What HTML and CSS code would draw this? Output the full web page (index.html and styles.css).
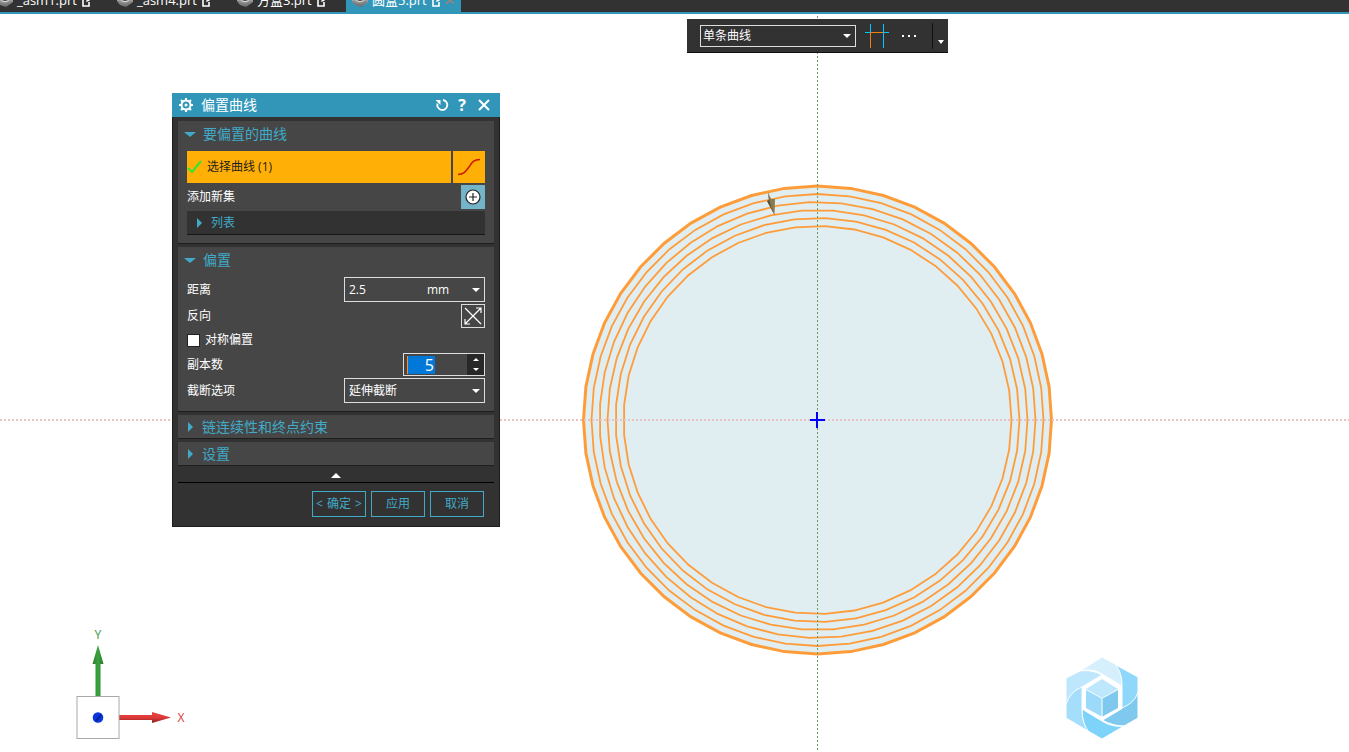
FILE: index.html
```html
<!DOCTYPE html>
<html lang="zh-CN">
<head>
<meta charset="utf-8">
<title>偏置曲线</title>
<link rel="stylesheet" href="styles.css">
</head>
<body>
<svg class="defs" aria-hidden="true">
  <defs>
    <linearGradient id="metal" x1="0" y1="0" x2="0" y2="1"><stop offset="0" stop-color="#d8d8d8"/><stop offset="1" stop-color="#686868"/></linearGradient>
    <symbol id="part" viewBox="0 0 16 16">
      <path d="M0 6 L6 2 L13 3 L16 7 V10 L9 15 L3 13 L0 9Z" fill="url(#metal)"/>
      <path d="M1 9 L4 12 L9 13 L15 9" fill="none" stroke="#777"/>
      <ellipse cx="8" cy="7" rx="4" ry="2.5" fill="#3c3c3c" stroke="#eee"/>
    </symbol>
    <symbol id="doc" viewBox="0 0 11 14">
      <path d="M5 2 H2 V13 H8 V9" fill="none" stroke="#fff" stroke-width="1.6"/>
      <path d="M5 9 L6 6 L9 3 L11 5 L8 8Z" fill="#fff"/>
    </symbol>
  </defs>
</svg>

<nav class="tabs">
  <button class="tab tab-first"><svg class="part"><use href="#part"/></svg><span>_asm1.prt</span><svg class="doc"><use href="#doc"/></svg></button>
  <button class="tab"><svg class="part"><use href="#part"/></svg><span>_asm4.prt</span><svg class="doc"><use href="#doc"/></svg></button>
  <button class="tab"><svg class="part"><use href="#part"/></svg><span>方盒3.prt</span><svg class="doc"><use href="#doc"/></svg></button>
  <button class="tab tab-active"><svg class="part"><use href="#part"/></svg><span>圆盒5.prt</span><svg class="doc"><use href="#doc"/></svg><svg class="tab-close" viewBox="0 0 8 8"><path d="M0 0 L8 8 M8 0 L0 8" stroke="#8b8583" stroke-width="2"/></svg></button>
</nav>

<main class="viewport">
  <svg class="scene" viewBox="0 14 1349 738" preserveAspectRatio="xMinYMin meet">
    <defs>
      <linearGradient id="green" x1="0" x2="1" y1="0" y2="0"><stop offset="0" stop-color="#2e7b31"/><stop offset=".5" stop-color="#3aa53d"/><stop offset="1" stop-color="#2a752d"/></linearGradient>
      <linearGradient id="red" x1="0" x2="0" y1="0" y2="1"><stop offset="0" stop-color="#e64545"/><stop offset=".5" stop-color="#e03a3a"/><stop offset="1" stop-color="#8c1f1f"/></linearGradient>
    </defs>
    <g id="rings"></g>
    <path d="M0 420H1349" stroke="#e6c4c4" stroke-width="2" stroke-dasharray="2 2"/>
    <path d="M817.500 16V750" stroke="#6d9a60" stroke-dasharray="2 2"/>
    <path d="M810 420H825M817 412V428" stroke="#0000ff" stroke-width="2"/>
    <path d="M768 192 L771 199 L775 199 L774.500 215 L767 201 L769 200Z" fill="#8a7a50"/>
    <path d="M768 192 L771 207 L774.500 215 L767 201 L769 200Z" fill="#57503a"/>

    <path d="M95.500 663H100.500V697H95.500Z M98 645 L103.500 664H92.500Z" fill="url(#green)"/>
    <path d="M119 715H152V712L171 717.500L152 723V720H119Z" fill="url(#red)"/>
    <rect x="77" y="696.500" width="42" height="42" fill="#fff" stroke="#a5aaa5"/>
    <circle cx="98" cy="717.500" r="5.300" fill="#0836e0"/>
    <path d="M96 721 L101 715" stroke="#062390" stroke-width="2"/>
    <text class="axis axis-y" x="98" y="639">Y</text>
    <text class="axis axis-x" x="181" y="722">X</text>

    <g stroke="#fff" stroke-width="1">
      <path d="M1080 671 L1102 657 L1117 665 C1121 671 1122 678 1122 686 L1102 674 C1096 670 1088 669 1080 671Z" fill="#d6effd"/>
      <path d="M1116 665 L1138 677 V692 C1137 700 1132 706 1122 710 V686 C1122 677 1120 671 1116 665Z" fill="#8fd8fb"/>
      <path d="M1138 692 V718 L1124 726 C1116 726 1110 724 1102 720 L1122 708 C1131 704 1136 699 1138 692Z" fill="#80c9ee"/>
      <path d="M1124 726 L1102 739 L1088 731 C1083 724 1082 717 1082 709 L1102 721 C1108 725 1116 727 1124 726Z" fill="#7dd3fa"/>
      <path d="M1088 731 L1066 718 V704 C1067 697 1073 690 1082 686 V709 C1082 718 1084 725 1088 731Z" fill="#a5defa"/>
      <path d="M1066 704 V678 L1080 671 C1088 670 1095 671 1102 675 L1082 687 C1074 690 1069 696 1066 704Z" fill="#bee7fd"/>
    </g>
    <path d="M1102 675 L1122 687 V709 L1102 721 L1082 709 V687Z" fill="#fff"/>
    <path d="M1102 679 L1118 689 L1102 698 L1086 689Z" fill="#bee7fd"/>
    <path d="M1086 690 L1101.500 698.500 V716.500 L1086 708Z" fill="#9bdaf9"/>
    <path d="M1102.500 698.500 L1118 690 V708 L1102.500 716.500Z" fill="#80c9ee"/>
  </svg>

  <div class="picker">
    <select class="combo curve-rule" aria-label="曲线规则"><option>单条曲线</option></select>
    <button class="bare" aria-label="在相交处停止"><svg class="cross-icon" viewBox="0 0 24 24"><path d="M0 8.500H24M5.500 0V24M18.500 0V24" stroke="#00c8ff"/><path d="M5.500 24V8.500H18.500" fill="none" stroke="#f08010"/></svg></button>
    <button class="bare more" aria-label="更多"><svg width="16" height="4" viewBox="0 0 16 4"><path d="M1 1h2v2h-2zM7 1h2v2h-2zM13 1h2v2h-2z" fill="#fff"/></svg></button>
    <button class="bare picker-menu" aria-label="选项"><svg width="6" height="4" viewBox="0 0 6 4"><path d="M0 0H6L3 4Z" fill="#fff"/></svg></button>
  </div>

  <form class="dialog" onsubmit="return false">
    <header class="titlebar">
      <svg class="gear" viewBox="0 0 14 14"><path d="M7 0V14M0 7H14M2 2L12 12M12 2L2 12" stroke="#fff" stroke-width="2"/><circle cx="7" cy="7" r="4.500" fill="#3296b9" stroke="#fff" stroke-width="2"/><circle cx="7" cy="7" r="1.500" fill="#fff"/></svg>
      <h1>偏置曲线</h1>
      <button class="bare" aria-label="重置"><svg width="14" height="14" viewBox="0 0 14 14"><path d="M8 2 A5 5 0 1 1 2.500 5.500" fill="none" stroke="#fff" stroke-width="1.800"/><path d="M0.500 2H5.500V7Z" fill="#fff"/></svg></button>
      <button class="bare help" aria-label="帮助">?</button>
      <button class="bare" aria-label="关闭"><svg width="12" height="12" viewBox="0 0 12 12"><path d="M1 1L11 11M11 1L1 11" stroke="#fff" stroke-width="2"/></svg></button>
    </header>

    <div class="body">
      <section class="group">
        <button class="group-head"><i class="tri-down"></i>要偏置的曲线</button>
        <div class="group-content">
          <div class="select-row">
            <button class="pick"><svg width="16" height="14" viewBox="0 0 16 14"><path d="M1 8L5 12L14 1" fill="none" stroke="#32e632" stroke-width="2"/></svg>选择曲线 (1)</button>
            <button class="pick-curve" aria-label="曲线"><svg width="24" height="18" viewBox="0 0 24 18"><path d="M1 16.500C7 16.500 9 13 12 9C15 4 17 1.500 23 1.500" fill="none" stroke="#d01800" stroke-width="1.500"/></svg></button>
          </div>
          <div class="row add-row">
            <span>添加新集</span>
            <button class="add" aria-label="添加新集"><svg width="16" height="16" viewBox="0 0 16 16"><circle cx="8" cy="8" r="7" fill="#fff" stroke="#222" stroke-width="1.200"/><path d="M8 4V12M4 8H12" stroke="#222" stroke-width="1.200"/></svg></button>
          </div>
          <button class="list"><i class="tri-right"></i>列表</button>
        </div>
      </section>

      <section class="group">
        <button class="group-head"><i class="tri-down"></i>偏置</button>
        <div class="group-content">
          <div class="row distance-row">
            <label for="distance">距离</label>
            <div class="field wide"><input id="distance" value="2.5"><select class="unit" aria-label="单位"><option>mm</option></select></div>
          </div>
          <div class="row">
            <span>反向</span>
            <button class="flip" aria-label="反向"><svg width="18" height="18" viewBox="0 0 18 18"><path d="M1 1L17 17M1 17L17 1M12 1H17V6M1 12V17H6" fill="none" stroke="#fff" stroke-width="1.200"/></svg></button>
          </div>
          <div class="row check-row"><input type="checkbox" id="sym"><label for="sym">对称偏置</label></div>
          <div class="row">
            <label for="copies">副本数</label>
            <div class="field spin">
              <input id="copies" value="5">
              <div class="steps"><button aria-label="增加"><i class="tri-up"></i></button><button aria-label="减少"><i class="tri-step"></i></button></div>
            </div>
          </div>
          <div class="row trim-row">
            <label for="trim">截断选项</label>
            <select id="trim" class="combo wide"><option>延伸截断</option></select>
          </div>
        </div>
      </section>

      <section class="group"><button class="group-head closed"><i class="tri-right"></i>链连续性和终点约束</button></section>
      <section class="group"><button class="group-head closed"><i class="tri-right"></i>设置</button></section>

      <button class="bare collapse" aria-label="收起"><i class="tri-up large"></i></button>
      <footer class="actions">
        <button class="ok"><span>&lt;</span><span>确定</span><span>&gt;</span></button>
        <button>应用</button>
        <button>取消</button>
      </footer>
    </div>
  </form>
</main>
<script src="scene.js"></script>
</body>
</html>
```

FILE: scene.js
```js
// Base curve followed by its offset copies: [radius, segments]
const rings = [[234, 44], [226, 44], [218, 43], [210, 42], [202, 41], [194, 41]];
const group = document.getElementById('rings');
rings.forEach(([r, n], index) => {
  const points = [];
  for (let k = 0; k < n; k++) {
    const a = k * 2 * Math.PI / n;
    points.push((817.5 + r * Math.cos(a)).toFixed(1) + ',' + (420 + r * Math.sin(a)).toFixed(1));
  }
  const polygon = document.createElementNS('http://www.w3.org/2000/svg', 'polygon');
  polygon.setAttribute('points', points.join(' '));
  polygon.setAttribute('class', index === 0 ? 'ring base' : 'ring');
  group.appendChild(polygon);
});
```

FILE: styles.css
```css
* { box-sizing: border-box; }

body {
  margin: 0;
  height: 100vh;
  display: flex;
  flex-direction: column;
  overflow: hidden;
  background: #fff;
  font: 12px/16px "Open Sans", "Noto Sans CJK SC", sans-serif;
  color: #fff;
}

button, input, select {
  font: inherit;
  color: inherit;
  border: 0;
  border-radius: 0;
  padding: 0;
  margin: 0;
  background: none;
  appearance: none;
  outline: none;
}

button { display: flex; align-items: center; justify-content: center; }
svg { flex: none; display: block; }
.defs { position: absolute; width: 0; height: 0; }

.tabs {
  display: flex;
  align-items: flex-end;
  height: 14px;
  flex: none;
  overflow: hidden;
  background: #323232;
  border-bottom: 2px solid #3296b9;
}
.tab {
  flex: none;
  width: 115px;
  height: 24px;
  padding: 0 6px;
  justify-content: flex-start;
  gap: 4px;
  font-size: 13px;
  white-space: nowrap;
}
.tab-first { margin-left: -9px; }
.tab:nth-child(-n+2) { width: 120px; }
.tab-active { background: #3296b9; }
.tab span { flex: none; }
.part { width: 16px; height: 16px; }
.doc { width: 11px; height: 14px; }
.tab-close { width: 8px; height: 8px; }

.viewport { position: relative; flex: 1; overflow: hidden; }
.scene { width: 100%; height: 100%; }
.ring { fill: none; stroke: #ff9c3a; stroke-width: 1.8; }
.ring.base { fill: #e0edf1; stroke-width: 3; }
.axis { font: 12px "Noto Sans", sans-serif; text-anchor: middle; }
.axis-y { fill: #4a9a4e; }
.axis-x { fill: #d84848; }

.picker {
  position: absolute;
  left: 687px;
  top: 5px;
  display: flex;
  align-items: center;
  height: 34px;
  padding-left: 13px;
  background: #323232;
  border-bottom: 1px solid #111;
}
.combo {
  border: 1px solid #ddd;
  padding: 0 4px;
  background: url("data:image/svg+xml,%3Csvg xmlns='http://www.w3.org/2000/svg' width='8' height='4'%3E%3Cpath d='M0 0H8L4 4Z' fill='white'/%3E%3C/svg%3E") no-repeat right 4px center;
}
.curve-rule { width: 156px; height: 22px; padding: 0 2px; }
.cross-icon { width: 24px; height: 24px; margin-left: 9px; }
.more { width: 40px; }
.picker-menu { width: 16px; height: 26px; margin-left: 3px; padding-top: 12px; border-left: 1px solid #111; }

.dialog {
  position: absolute;
  left: 172px;
  top: 79px;
  width: 328px;
  background: #323232;
  border: 1px solid #1c1c1c;
  border-top: 0;
}
.titlebar {
  display: flex;
  align-items: center;
  height: 24px;
  margin: 0 -1px;
  padding: 0 10px 0 7px;
  gap: 8px;
  background: #3296b9;
}
.titlebar h1 { flex: 1; margin: 0; font-size: 14px; line-height: 20px; font-weight: 400; }
.gear { width: 14px; height: 14px; }
.help { width: 10px; margin-right: 3px; font-size: 16px; font-weight: 700; }

.body { padding: 4px 5px 9px; display: flex; flex-direction: column; gap: 3px; }
.group { background: #464646; border-bottom: 1px solid #1e1e1e; }
.group-head {
  width: 100%;
  height: 26px;
  padding-left: 6px;
  gap: 7px;
  justify-content: flex-start;
  color: #41aac8;
  font-size: 14px;
}
.group-head.closed { height: 23px; padding-left: 10px; }
.group-content { padding: 4px 9px 8px; }

.tri-down, .tri-step { border: 5px solid transparent; border-top-color: #41aac8; border-bottom: 0; }
.tri-down { border-width: 5px 6px 0; }
.tri-right { border: 5px solid transparent; border-left-color: #41aac8; border-right: 0; margin-right: 2px; }
.tri-up { border: 3px solid transparent; border-bottom-color: #fff; border-top: 0; }
.tri-step { border-width: 3px 3px 0; border-top-color: #fff; }
.tri-up.large { border-width: 0 5px 5px; }

.select-row { display: flex; gap: 2px; height: 32px; color: #1e1e1e; }
.pick { flex: 1; justify-content: flex-start; gap: 4px; background: #ffaf05; }
.pick-curve { width: 32px; background: #ffaf05; }
.row { display: flex; align-items: center; justify-content: space-between; height: 25px; }
.add-row { height: 24px; margin: 2px 0; }
.add { width: 24px; height: 24px; background: #73b4c8; }
.list {
  width: 100%;
  height: 24px;
  padding-left: 10px;
  gap: 7px;
  justify-content: flex-start;
  background: #323232;
  border-bottom: 1px solid #161616;
  color: #41aac8;
}

.field { display: flex; border: 1px solid #ddd; }
.wide { width: 141px; height: 25px; }
.field input { min-width: 0; }
#distance { flex: 1; padding-left: 4px; }
.unit {
  width: 60px;
  padding-left: 3px;
  background: url("data:image/svg+xml,%3Csvg xmlns='http://www.w3.org/2000/svg' width='8' height='4'%3E%3Cpath d='M0 0H8L4 4Z' fill='white'/%3E%3C/svg%3E") no-repeat right 4px center;
}
.distance-row { margin-bottom: 1px; }
.flip { width: 24px; height: 24px; border: 1px solid #ddd; }
.check-row { justify-content: flex-start; gap: 5px; height: 24px; }
.check-row input { width: 13px; height: 13px; background: #fff; border: 1px solid #222; }
.spin { width: 82px; height: 23px; padding-left: 3px; justify-content: space-between; align-items: center; }
#copies {
  width: 28px;
  height: 18px;
  padding-right: 1px;
  text-align: right;
  font-size: 16px;
  background: #0078d7;
  border-left: 1px solid #ff8c28;
}
.steps { width: 17px; height: 21px; display: flex; flex-direction: column; background: #282828; }
.steps button { flex: 1; }
.trim-row { margin-top: 1px; }

.collapse { height: 14px; border-bottom: 1px solid #000; }
.actions { display: flex; justify-content: flex-end; gap: 5px; padding: 5px 10px 0 0; }
.actions button { width: 54px; height: 26px; border: 1px solid #41aac8; color: #41aac8; }
.actions .ok { gap: 4px; }
```
